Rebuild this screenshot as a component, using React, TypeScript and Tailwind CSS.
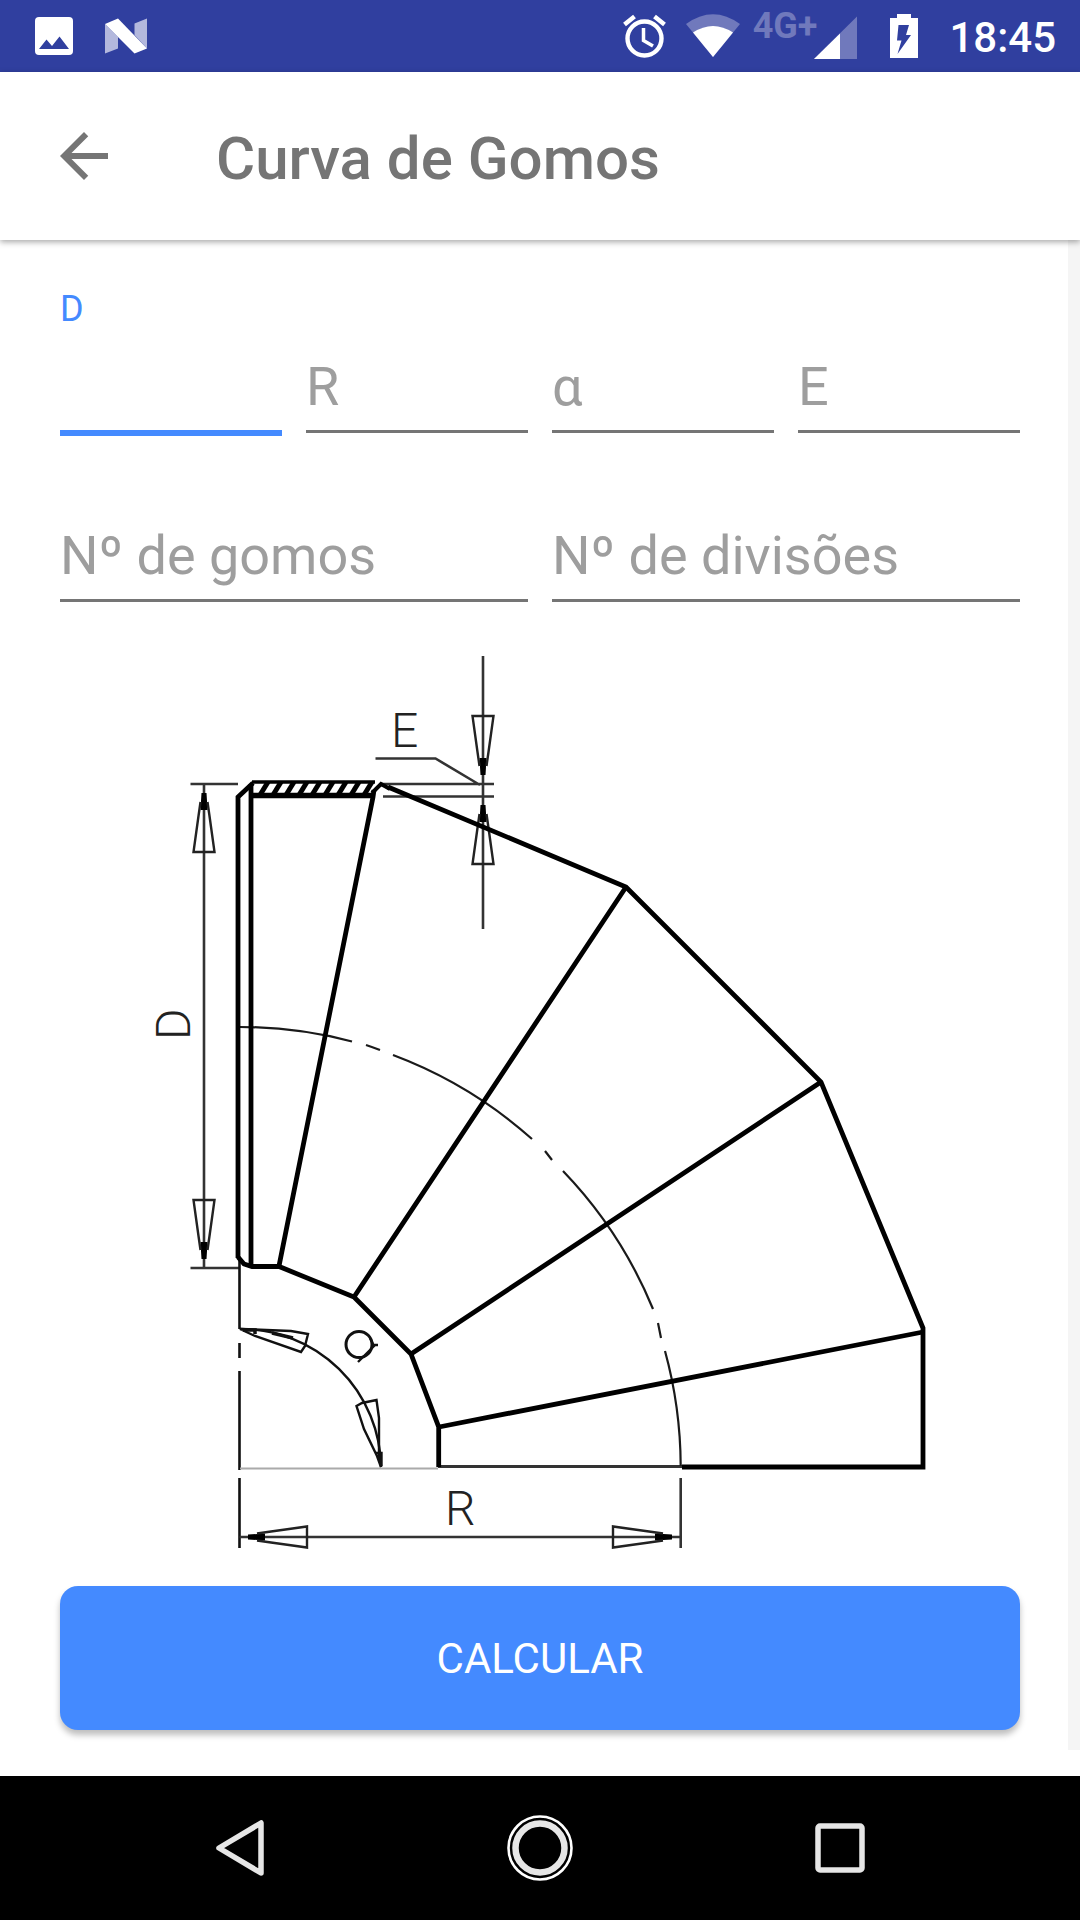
import type { ReactNode } from "react";

function Glyph({ viewBox, className, children }: { viewBox: string; className: string; children: ReactNode }) {
  return (
    <svg viewBox={viewBox} className={className} aria-hidden="true">
      {children}
    </svg>
  );
}

function StatusBar() {
  return (
    <header className="flex h-[72px] shrink-0 items-center bg-[#303f9f] pr-[24px] pl-[35px] text-white">
      <Glyph viewBox="0 0 38 72" className="h-[72px] w-[38px]">
        <rect y="17" width="38" height="38" rx="4" fill="#fff" />
        <path d="M4 49 L11.500 39.500 L17 46 L24.500 36.500 L34 49 Z" fill="#303f9f" />
      </Glyph>
      <Glyph viewBox="0 0 42 72" className="ml-8 h-[72px] w-[42px]">
        <path d="M0 24 L13 37 V48.500 L0 53.500 Z M42 18.500 V48.500 L29.500 35 V23.500 Z" fill="#b3b8dd" />
        <path d="M0 24 L13 18.500 L42 48.500 L29.500 53.500 Z" fill="#fff" />
      </Glyph>
      <div className="ml-auto flex items-center">
        <Glyph viewBox="0 0 43 72" className="h-[72px] w-[43px]">
          <circle cx="21.500" cy="38.500" r="17" fill="none" stroke="#fff" strokeWidth="4.400" />
          <path d="M20.500 28 V40.500 L30 46" fill="none" stroke="#fff" strokeWidth="3.500" />
          <path d="M1.500 24.500 L11.500 16.500 M41.500 24.500 L31.500 16.500" stroke="#fff" strokeWidth="4.500" />
        </Glyph>
        <Glyph viewBox="0 0 54 72" className="ml-5 h-[72px] w-[54px]">
          <path d="M27 57 L0 24 Q27 4.500 54 24 Z" fill="#7079bc" />
          <path d="M27 57 L7 32.500 Q27 19.500 47 32.500 Z" fill="#fff" />
        </Glyph>
        <span className="ml-[13px] h-[72px] pt-[5px] text-[36px] leading-[42px] font-bold text-[#7079bc]">4G+</span>
        <Glyph viewBox="0 0 43 72" className="-ml-[3px] h-[72px] w-[43px]">
          <path d="M43 16.500 V59 H0 Z" fill="#7079bc" />
          <path d="M26 33.500 V59 H0 Z" fill="#fff" />
        </Glyph>
        <Glyph viewBox="0 0 28 72" className="ml-[33px] h-[72px] w-[28px]">
          <path d="M0 18 H7 V14 H21 V18 H28 V58 H0 Z" fill="#fff" />
          <path d="M8.500 25 H19 L16 35 H21 L7.500 54 L11.500 40.500 H7 Z" fill="#303f9f" />
        </Glyph>
        <span className="ml-[31px] pt-1 text-[42px] leading-[48px] font-medium">18:45</span>
      </div>
    </header>
  );
}

function AppBar() {
  return (
    <div className="relative z-10 flex h-[168px] shrink-0 items-center bg-white px-12 text-[#757575] shadow-[0_2px_6px_rgba(0,0,0,0.35)]">
      <button type="button" aria-label="Voltar" className="size-[72px]">
        <Glyph viewBox="0 0 24 24" className="size-[72px]">
          <path d="M20 11H7.830l5.590-5.590L12 4l-8 8 8 8 1.410-1.410L7.830 13H20v-2z" fill="currentColor" />
        </Glyph>
      </button>
      <h1 className="ml-24 pt-[5px] text-[60px] leading-[72px] font-medium">Curva de Gomos</h1>
    </div>
  );
}

function Field({ id, label, active = false }: { id: string; label: string; active?: boolean }) {
  return (
    <div className="grid h-[152px] min-w-0 flex-1">
      <label
        htmlFor={id}
        className={
          active
            ? "col-start-1 row-start-1 mt-1 self-start text-[36px] leading-[42px] text-[#448aff]"
            : "pointer-events-none col-start-1 row-start-1 mb-[17px] self-end text-[54px] leading-[64px] whitespace-nowrap text-[#9e9e9e]"
        }
      >
        {label}
      </label>
      <input
        id={id}
        type="text"
        className={
          active
            ? "col-start-1 row-start-1 h-[90px] w-full self-end border-b-6 border-[#448aff] bg-transparent text-[54px] outline-none"
            : "col-start-1 row-start-1 mb-[3px] h-[87px] w-full self-end border-b-3 border-[#757575] bg-transparent text-[54px] outline-none"
        }
      />
    </div>
  );
}

/* Dimension arrow, tip at the origin and pointing up. */
function Arrow({ x, y, turn }: { x: number; y: number; turn: number }) {
  return (
    <g transform={`translate(${x} ${y}) rotate(${turn})`} fill="none" stroke="#222" strokeWidth="2.400">
      <path d="M-3.500 26 L-2.500 9 H2.500 L3.500 26 Z" fill="#000" stroke="none" />
      <path d="M-3.500 18 L-5.500 32 L-8 50 L-10.500 68 H10.500 L8 50 L5.500 32 L3.500 18" />
    </g>
  );
}

const hatch = [0, 1, 2, 3, 4, 5, 6, 7, 8];

function ElbowDrawing() {
  return (
    <svg viewBox="60 640 960 920" role="img" aria-label="Curva de gomos com as cotas D, R, E e α" className="mt-[35px] block w-full">
      {/* dimension and extension lines */}
      <g fill="none" stroke="#333" strokeWidth="2.600">
        <path d="M483 656 V929 M375.500 758.500 H435.500 L480 785 M380 784 H494 M383 796.500 H494" />
        <path d="M190.500 784 H238 M190.500 1268 H239 M204 784 V1268" />
        <path d="M239.500 1258 V1329 M239.500 1343 V1358 M239.500 1371 V1470 M239.500 1478 V1548" stroke="#111" />
        <path d="M680.700 1478 V1548 M239.500 1537 H681" />
        <path d="M240 1468.500 H438" stroke="#aaa" strokeWidth="2" />
        <path d="M438 1466.500 H684" strokeWidth="3.200" />
      </g>
      <Arrow x={483} y={784} turn={180} />
      <Arrow x={483} y={796} turn={0} />
      <Arrow x={204} y={784} turn={0} />
      <Arrow x={204} y={1268} turn={180} />
      <Arrow x={239} y={1537} turn={-90} />
      <Arrow x={681} y={1537} turn={90} />

      {/* centre line */}
      <g fill="none" stroke="#1a1a1a" strokeWidth="2.200">
        <path d="M239 1027 A441 441 0 0 1 352 1041.500 M366 1045 A441 441 0 0 1 380 1050 M393 1055 A441 441 0 0 1 532 1139 M545 1151 L552 1160 M563 1171 A441 441 0 0 1 653 1309 M658 1323 L661 1338 M665 1351 A441 441 0 0 1 680.700 1466" />
      </g>

      {/* segments */}
      <g fill="none" stroke="#000" strokeWidth="4.800">
        <path d="M238 1258 V797 L253 783" />
        <path d="M251 784 V1268" />
        <path d="M252 782 H375" strokeWidth="3.500" />
        <path d="M251 795.500 H374" strokeWidth="5.500" />
        <path d="M374 790 L373 797 L279 1266" />
        <path d="M372 793 L381 784 L390 789" strokeWidth="4" />
        <path d="M388 787 L626 887 L821 1082 L923 1328 V1467 H682" />
        <path d="M238 1257 L244 1264 L252 1266.500 H279 L354 1297 L411 1354 L438.700 1427 V1467" />
        <path d="M626 887 L354 1297 M821 1082 L411 1354 M923 1332 L439 1427" />
      </g>
      <g stroke="#000" strokeWidth="5">
        {hatch.map((i) => (
          <path key={i} d={`M${260 + i * 13} 795 L${268 + i * 13} 782`} />
        ))}
      </g>

      {/* angle */}
      <g fill="none" stroke="#111" strokeWidth="2.400">
        <path d="M240 1329 A140 140 0 0 1 381 1467" />
        <path d="M240 1329 L291 1331 L308 1334 L305 1346 L301 1352 L255 1336 Z" />
        <path d="M243 1330 H255 V1334" strokeWidth="3.500" />
        <path d="M272 1333 L293 1338" strokeWidth="3.500" />
        <path d="M381 1467 L379 1454 V1418 L376.500 1400 L362 1403 L356.500 1406 L364 1429 L377 1456 Z" />
        <path d="M376 1453 H381.500 V1466" />
        <circle cx="359" cy="1344.500" r="13" strokeWidth="3" />
        <path d="M370 1338 L374 1346 L358 1362 M371 1345 H378" />
      </g>

      <g fill="#222" className="text-[48px] font-light">
        <text x="391" y="747">E</text>
        <text x="445" y="1525">R</text>
        <text transform="translate(190 1040) rotate(-90)">D</text>
      </g>
    </svg>
  );
}

function NavBar() {
  return (
    <nav className="grid h-[144px] shrink-0 grid-cols-[1fr_auto_1fr] items-center gap-[230px] bg-black">
      <button type="button" aria-label="Voltar" className="justify-self-end">
        <Glyph viewBox="0 0 66 66" className="size-[66px]">
          <path d="M8 33 L50 8 V58 Z" fill="none" stroke="#e6e6e6" strokeWidth="5.500" strokeLinejoin="round" />
        </Glyph>
      </button>
      <button type="button" aria-label="Início">
        <Glyph viewBox="0 0 66 66" className="size-[66px]">
          <circle cx="33" cy="33" r="31.500" fill="none" stroke="#fff" strokeWidth="2.600" />
          <circle cx="33" cy="33" r="24.500" fill="none" stroke="#e6e6e6" strokeWidth="6.500" />
        </Glyph>
      </button>
      <button type="button" aria-label="Recentes" className="justify-self-start">
        <Glyph viewBox="0 0 66 66" className="size-[66px]">
          <rect x="15" y="11" width="44" height="44" rx="2" fill="none" stroke="#e6e6e6" strokeWidth="5.500" />
        </Glyph>
      </button>
    </nav>
  );
}

export default function App() {
  return (
    <div className="flex min-h-screen flex-col bg-white font-['Roboto',sans-serif]">
      <StatusBar />
      <AppBar />
      <main className="flex grow pb-[26px]">
        <form className="flex min-w-0 grow flex-col pt-11 pr-12 pl-[60px]" onSubmit={(e) => e.preventDefault()}>
          <div className="flex gap-6">
            <Field id="diameter" label="D" active />
            <Field id="radius" label="R" />
            <Field id="angle" label="α" />
            <Field id="thickness" label="E" />
          </div>
          <div className="mt-[17px] flex gap-6">
            <Field id="segments" label="Nº de gomos" />
            <Field id="divisions" label="Nº de divisões" />
          </div>
          <ElbowDrawing />
          <button
            type="submit"
            className="mt-[26px] h-[144px] w-full rounded-[18px] bg-[#448aff] text-[42px] text-white shadow-[0_5px_6px_rgba(0,0,0,0.26)]"
          >
            CALCULAR
          </button>
        </form>
        <div className="w-3 shrink-0 bg-[#f5f5f5]" />
      </main>
      <NavBar />
    </div>
  );
}
